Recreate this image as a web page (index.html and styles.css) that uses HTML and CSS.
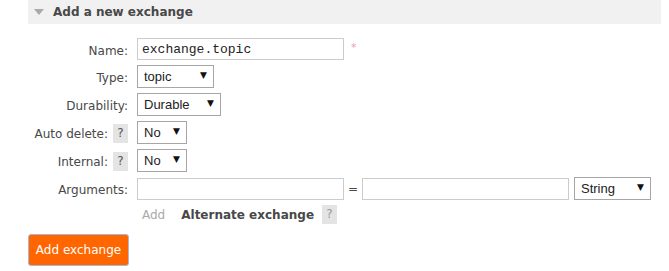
FILE: index.html
```html
<!DOCTYPE html>
<html lang="en">
<head>
  <meta charset="UTF-8" />
  <title>Add a new exchange</title>
  <link rel="stylesheet" href="styles.css">
</head>
<body>
  <div class="section">
    <h2 class="section-head"><span class="toggle"></span>Add a new exchange</h2>

    <form class="add-form">
      <div class="row row-name">
        <label class="lbl">Name:</label>
        <input type="text" class="text-in mono" value="exchange.topic">
        <span class="mand">*</span>
      </div>
      <div class="row">
        <label class="lbl">Type:</label>
        <span class="sel w-type"><select><option>topic</option></select></span>
      </div>
      <div class="row">
        <label class="lbl">Durability:</label>
        <span class="sel w-dur"><select><option>Durable</option></select></span>
      </div>
      <div class="row">
        <label class="lbl">Auto delete: <span class="help">?</span></label>
        <span class="sel w-no"><select><option>No</option></select></span>
      </div>
      <div class="row">
        <label class="lbl">Internal: <span class="help">?</span></label>
        <span class="sel w-no"><select><option>No</option></select></span>
      </div>
      <div class="row">
        <label class="lbl">Arguments:</label>
        <input type="text" class="text-in">
        <span class="eq">=</span>
        <input type="text" class="text-in">
        <span class="sel w-str"><select><option>String</option></select></span>
      </div>
      <div class="row extra">
        <span class="add-link">Add</span>
        <strong class="alt">Alternate exchange</strong>
        <span class="help">?</span>
      </div>

      <button type="button" class="submit-btn">Add exchange</button>
    </form>
  </div>
</body>
</html>
```

FILE: styles.css
```css
/* Basic resets & layout */
body {
  margin: 0;
  padding: 0 8px;
  font-family: 'DejaVu Sans', Verdana, sans-serif;
  font-size: 12px;
  color: #484848;
  background: #fff;
}

.section {
  margin-left: 20px;
}

.section-head {
  display: flex;
  align-items: center;
  height: 24px;
  margin: 0 0 14px;
  padding-left: 6px;
  background: #f1f1f1;
  font-size: 12px;
  font-weight: bold;
  color: #484848;
}

.toggle {
  width: 0;
  height: 0;
  margin-right: 9px;
  border-left: 5px solid transparent;
  border-right: 5px solid transparent;
  border-top: 6px solid #aaa;
}

.add-form {
  margin: 0;
}

.row {
  display: flex;
  align-items: center;
  height: 23px;
  margin-bottom: 5px;
}

.row-name {
  height: 22px;
}

.lbl {
  display: flex;
  align-items: center;
  justify-content: flex-end;
  width: 100px;
  margin-right: 9px;
  padding-top: 3px;
}

.help {
  display: inline-block;
  width: 15px;
  height: 19px;
  line-height: 19px;
  margin-left: 5px;
  margin-top: -2px;
  background: #e4e4e4;
  color: #555;
  text-align: center;
}

.text-in {
  box-sizing: border-box;
  width: 207px;
  height: 22px;
  margin: 0;
  padding: 0 4px;
  border: 1px solid #ccc;
  font-family: 'Liberation Sans', Arial, sans-serif;
  font-size: 13px;
  color: #222;
}

.mono {
  font-family: 'Liberation Mono', 'Courier New', monospace;
}

.mand {
  margin-left: 7px;
  color: #e8a0b0;
  font-size: 11px;
  align-self: flex-start;
  margin-top: 3px;
}

.eq {
  width: 18px;
  text-align: center;
}

.sel {
  position: relative;
  display: inline-block;
  height: 23px;
}

.sel select {
  -webkit-appearance: none;
  appearance: none;
  box-sizing: border-box;
  width: 100%;
  height: 23px;
  margin: 0;
  padding: 0 0 0 6px;
  border: 1px solid #a6a6a6;
  border-radius: 0;
  background: #fff;
  font-family: 'Liberation Sans', Arial, sans-serif;
  font-size: 13px;
  color: #222;
}

.sel::after {
  content: "\25BC";
  position: absolute;
  right: 7px;
  top: 5px;
  font-size: 9px;
  color: #111;
  pointer-events: none;
}

.w-type { width: 77px; }
.w-dur { width: 84px; }
.w-no { width: 50px; }
.w-str { width: 77px; margin-left: 5px; }

.extra {
  padding-left: 114px;
  height: 20px;
  margin-top: 0;
  margin-bottom: 0;
}

.add-link {
  color: #aaa;
  margin-right: 16px;
}

.alt {
  margin-right: 8px;
}

.extra .help {
  margin-left: 0;
  color: #999;
}

.submit-btn {
  box-sizing: border-box;
  width: 101px;
  height: 32px;
  margin-top: 9px;
  padding: 0;
  border: 1px solid #a9b6d8;
  border-radius: 3px;
  background: #ff6600;
  color: #fff;
  font-family: 'DejaVu Sans', Verdana, sans-serif;
  font-size: 12px;
  cursor: pointer;
}
```
